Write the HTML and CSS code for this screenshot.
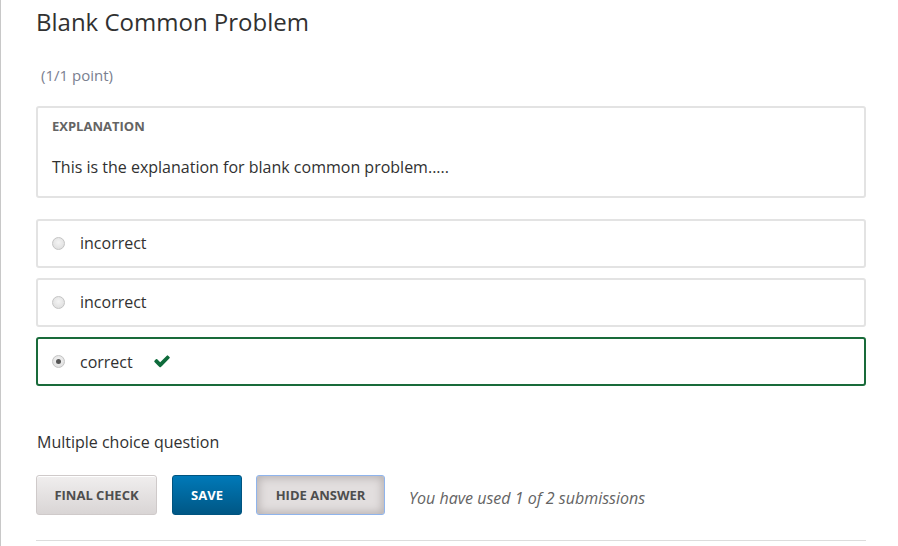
FILE: index.html
```html
<!DOCTYPE html>
<html>
<head>
<meta charset="utf-8">
<link rel="stylesheet" href="styles.css">
</head>
<body>
<div class="page">
  <h2 class="title">Blank Common Problem</h2>
  <div class="points">(1/1 point)</div>
  <div class="explanation">
    <div class="exp-label">EXPLANATION</div>
    <p class="exp-text">This is the explanation for blank common problem.....</p>
  </div>
  <div class="choices">
    <div class="choice"><span class="radio"></span><span class="choice-text">incorrect</span></div>
    <div class="choice"><span class="radio"></span><span class="choice-text">incorrect</span></div>
    <div class="choice correct"><span class="radio checked"></span><span class="choice-text">correct</span>
      <svg class="check" viewBox="0 0 1792 1792" width="18" height="18"><path fill="#0e6b3b" d="M1671 566q0 40-28 68l-724 724-136 136q-28 28-68 28t-68-28l-136-136-362-362q-28-28-28-68t28-68l136-136q28-28 68-28t68 28l294 295 656-657q28-28 68-28t68 28l136 136q28 28 28 68z"/></svg>
    </div>
  </div>
  <div class="qtype">Multiple choice question</div>
  <div class="actions">
    <button class="btn btn-gray">FINAL CHECK</button>
    <button class="btn btn-blue">SAVE</button>
    <button class="btn btn-pressed">HIDE ANSWER</button>
    <span class="submissions">You have used 1 of 2 submissions</span>
  </div>
  <div class="divider"></div>
</div>
</body>
</html>
```
FILE: styles.css
```css
html, body {
  margin: 0;
  padding: 0;
  background: #fff;
}
body {
  font-family: "Open Sans", "Noto Sans", sans-serif;
  color: #313131;
  border-left: 1px solid #c8c8c8;
  min-height: 546px;
  box-sizing: border-box;
}
.page {
  width: 830px;
  padding-left: 35px;
  padding-top: 7px;
}
.title {
  margin: 0;
  font-size: 24px;
  font-weight: 400;
  line-height: 30px;
  color: #313131;
}
.points {
  margin-top: 28px;
  font-size: 15px;
  line-height: 20px;
  color: #7a8090;
  padding-left: 5px;
}
.explanation {
  margin-top: 21px;
  border: 2px solid #e3e3e3;
  border-radius: 3px;
  padding: 8px 14px 17px;
}
.exp-label {
  font-size: 13px;
  font-weight: 700;
  line-height: 20px;
  color: #646464;
}
.exp-text {
  margin: 19px 0 0;
  font-size: 16px;
  line-height: 24px;
  color: #313131;
}
.choices {
  margin-top: 21px;
  display: flex;
  flex-direction: column;
  gap: 10px;
}
.choice {
  height: 45px;
  border: 2px solid #e3e3e3;
  border-radius: 3px;
  display: flex;
  align-items: center;
  padding-left: 14px;
  font-size: 16px;
  line-height: 20px;
  color: #313131;
}
.choice.correct {
  border-color: #196b3a;
}
.radio {
  width: 11px;
  height: 11px;
  border-radius: 50%;
  border: 1px solid #c4c4c4;
  background: radial-gradient(circle at 50% 40%, #f4f4f4, #dadada);
  flex: none;
  position: relative;
}
.radio.checked::after {
  content: "";
  position: absolute;
  left: 3px;
  top: 3px;
  width: 5px;
  height: 5px;
  border-radius: 50%;
  background: #555;
}
.choice-text {
  margin-left: 15px;
  margin-top: -2px;
}
.correct .choice-text {
  margin-top: 0;
}
.check {
  margin-left: 20px;
  margin-top: -2px;
}
.qtype {
  margin-top: 46px;
  font-size: 16px;
  line-height: 20px;
  padding-left: 1px;
  color: #313131;
}
.actions {
  margin-top: 23px;
  display: flex;
  align-items: center;
  gap: 14px;
}
.btn {
  height: 40px;
  font-family: "Open Sans", "Noto Sans", sans-serif;
  font-size: 13px;
  font-weight: 700;
  line-height: 38px;
  border-radius: 3px;
  padding: 0;
  white-space: nowrap;
  cursor: pointer;
}
.btn-gray {
  width: 121px;
  color: #4e4e4e;
  background: linear-gradient(#f0eeee, #d9d5d5);
  border: 1px solid #cfcaca;
  box-shadow: inset 0 1px 0 #fff;
}
.btn-blue {
  width: 70px;
  margin-left: 1px;
  color: #fff;
  background: linear-gradient(#0079b8, #005785);
  border: 1px solid #005480;
}
.btn-pressed {
  width: 129px;
  color: #4e4e4e;
  background: #e2dede;
  border: 1px solid #8fb4ec;
  box-shadow: inset 0 0 8px 2px #b8b2b2;
}
.submissions {
  margin-left: 10px;
  font-size: 16px;
  font-style: italic;
  color: #646464;
  margin-top: 5px;
}
.divider {
  margin-top: 25px;
  height: 1px;
  background: #dcdcdc;
}
```
